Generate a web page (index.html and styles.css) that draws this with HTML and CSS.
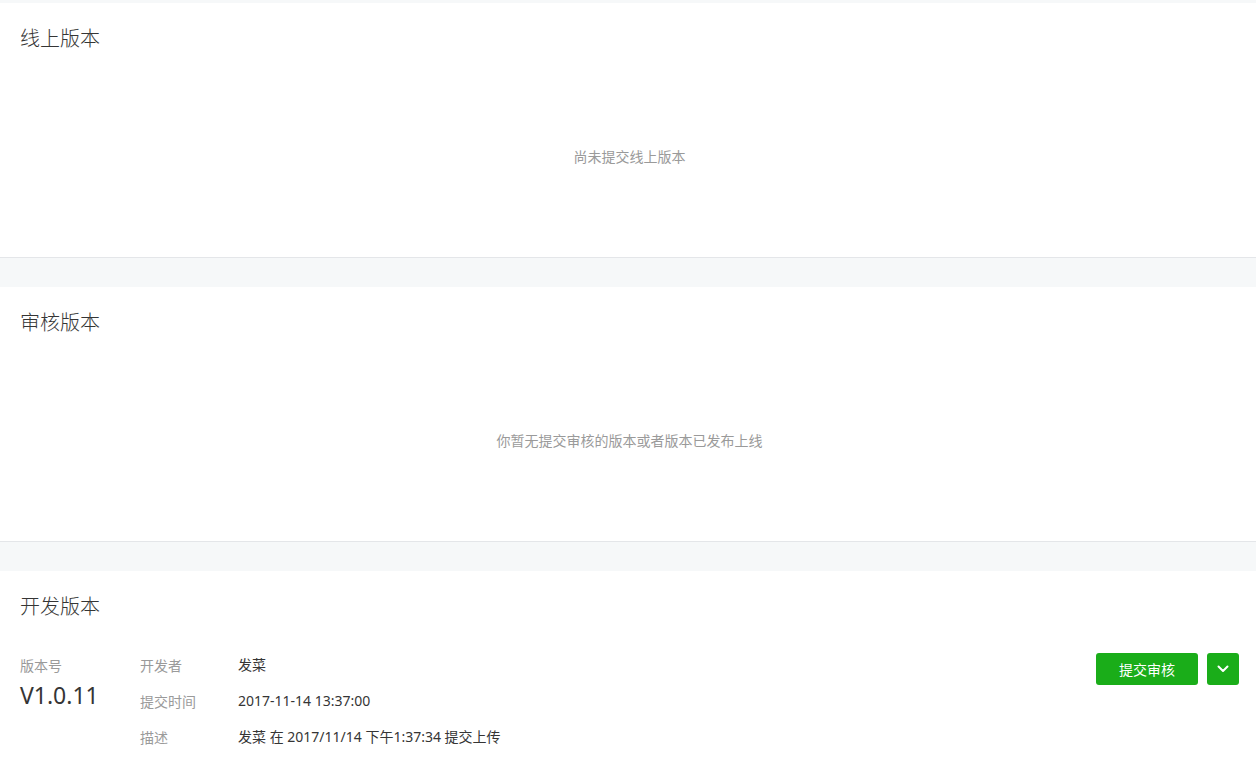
FILE: index.html
```html
<!DOCTYPE html>
<html lang="zh-CN">
<head>
<meta charset="utf-8">
<title>版本管理</title>
<link rel="stylesheet" href="styles.css">
</head>
<body>
<main class="page">
  <section class="panel">
    <h2 class="panel-title">线上版本</h2>
    <div class="empty">尚未提交线上版本</div>
  </section>
  <section class="panel">
    <h2 class="panel-title">审核版本</h2>
    <div class="empty">你暂无提交审核的版本或者版本已发布上线</div>
  </section>
  <section class="panel panel-dev">
    <h2 class="panel-title">开发版本</h2>
    <div class="dev">
      <div class="ver">
        <div class="ver-label">版本号</div>
        <div class="ver-num">V1.0.11</div>
      </div>
      <dl class="info">
        <div class="row"><dt>开发者</dt><dd>发菜</dd></div>
        <div class="row"><dt>提交时间</dt><dd>2017-11-14 13:37:00</dd></div>
        <div class="row"><dt>描述</dt><dd>发菜 在 2017/11/14 下午1:37:34 提交上传</dd></div>
      </dl>
      <div class="actions">
        <button class="btn btn-primary">提交审核</button>
        <button class="btn btn-drop" aria-label="更多">
          <svg width="12" height="8" viewBox="0 0 12 8"><path d="M1.5 1.5 L6 6 L10.5 1.5" fill="none" stroke="#fff" stroke-width="2" stroke-linecap="round" stroke-linejoin="round"/></svg>
        </button>
      </div>
    </div>
  </section>
</main>
</body>
</html>
```

FILE: styles.css
```css
* { box-sizing: border-box; }
html, body { margin: 0; padding: 0; }
body {
  background: #f6f8f9;
  font-family: "Noto Sans", "Noto Sans CJK SC", sans-serif;
  color: #353535;
  font-size: 14px;
}
.page {
  padding-top: 3px;
}
.panel {
  background: #fff;
  border-bottom: 1px solid #e4e6e9;
  margin-bottom: 29px;
  height: 255px;
}
.panel-dev {
  height: auto;
  min-height: 200px;
  border-bottom: none;
  margin-bottom: 0;
  padding-bottom: 20px;
}
.panel-title {
  margin: 0;
  padding: 20px 20px 0;
  font-size: 20px;
  line-height: 30px;
  font-weight: 300;
  color: #353535;
  font-family: "Noto Sans CJK SC", sans-serif;
}
.empty {
  padding-top: 93px;
  padding-left: 3px;
  line-height: 20px;
  text-align: center;
  color: #9a9a9a;
  font-size: 14px;
  font-family: "Noto Sans CJK SC", sans-serif;
}
.dev {
  display: flex;
  align-items: flex-start;
  padding: 26px 17px 0 20px;
}
.ver {
  width: 120px;
}
.ver-label {
  line-height: 36px;
  font-size: 14px;
  color: #9a9a9a;
  font-family: "Noto Sans CJK SC", sans-serif;
}
.ver-num {
  font-size: 23px;
  line-height: 24px;
  color: #353535;
}
.info {
  margin: 0;
  flex: 1;
}
.row {
  display: flex;
  line-height: 36px;
}
.row dt {
  width: 98px;
  color: #9a9a9a;
  font-size: 14px;
  font-family: "Noto Sans CJK SC", sans-serif;
}
.row dd {
  margin: 0;
  color: #353535;
  font-size: 14px;
}
.actions {
  display: flex;
  gap: 9px;
  padding-top: 6px;
}
.btn {
  border: none;
  background: #1aad19;
  color: #fff;
  border-radius: 3px;
  height: 32px;
  font-family: "Noto Sans CJK SC", sans-serif;
  font-size: 14px;
  cursor: pointer;
  padding: 0;
}
.btn-primary {
  width: 102px;
}
.btn-drop {
  width: 32px;
  display: flex;
  align-items: center;
  justify-content: center;
}
```
